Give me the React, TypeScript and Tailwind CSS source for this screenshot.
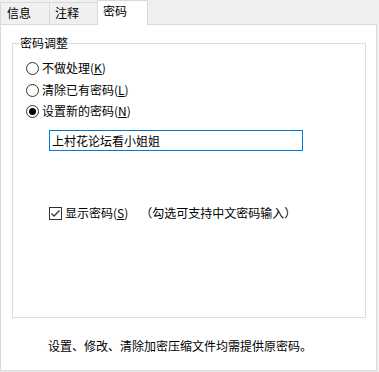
import React from "react";

function Radio({ checked }: { checked?: boolean }) {
  return (
    <svg width="13" height="13" viewBox="0 0 13 13" className="shrink-0">
      <circle cx="6.5" cy="6.5" r="6" fill="#fff" stroke="#333" strokeWidth="1" />
      {checked && <circle cx="6.5" cy="6.5" r="3.5" fill="#000" />}
    </svg>
  );
}

function Check() {
  return (
    <svg width="13" height="13" viewBox="0 0 13 13" className="shrink-0">
      <rect x="0.5" y="0.5" width="12" height="12" fill="#fff" stroke="#333" strokeWidth="1" />
      <polyline points="2.5,6.5 5,9 10.5,3.5" fill="none" stroke="#333" strokeWidth="1.3" />
    </svg>
  );
}

export default function App() {
  const font = { fontFamily: '"Noto Sans CJK SC", "Noto Sans", sans-serif' };
  return (
    <div
      className="w-[379px] h-[372px] bg-[#f0f0f0] text-[12px] text-black overflow-hidden"
      style={font}
    >
      {/* tabs */}
      <div className="flex items-end h-[24px]">
        <div className="w-[50px] h-[22px] border-l border-t border-r border-[#d9d9d9] pl-[6px] leading-[20px]">
          信息
        </div>
        <div className="w-[48px] h-[22px] border-t border-r border-[#d9d9d9] pl-[5px] leading-[20px]">
          注释
        </div>
        <div className="relative z-10 -ml-px -mb-px w-[51px] h-[25px] bg-white border-l border-t border-r border-[#d9d9d9] pl-[5px] leading-[20px]">
          密码
        </div>
      </div>
      {/* panel */}
      <div className="w-[377px] h-[347px] bg-white border border-[#d9d9d9] pl-[11px] pt-[18px]">
        <div className="relative w-[354px] h-[275px] border border-[#dcdcdc] pl-[13px] pt-[14px]">
          <span className="absolute left-[6px] top-[-9px] px-[1px] bg-white leading-[16px]">
            密码调整
          </span>
          <div className="flex items-center gap-[3px] h-[20px] leading-[20px]">
            <Radio />
            <span>
              不做处理(<span className="underline">K</span>)
            </span>
          </div>
          <div className="flex items-center gap-[3px] h-[20px] mt-[2px] leading-[20px]">
            <Radio />
            <span>
              清除已有密码(<span className="underline">L</span>)
            </span>
          </div>
          <div className="flex items-center gap-[3px] h-[20px] mt-[1px] leading-[20px]">
            <Radio checked />
            <span>
              设置新的密码(<span className="underline">N</span>)
            </span>
          </div>
          <div className="ml-[23px] mt-[9px] w-[254px] h-[21px] border border-[#0078d7] pl-[2px] text-[12px] leading-[19px]">
            上村花论坛看小姐姐
          </div>
          <div className="ml-[23px] mt-[52px] flex items-center gap-[3px] h-[20px] leading-[20px]">
            <Check />
            <span>
              显示密码(<span className="underline">S</span>)
            </span>
            <span className="ml-[9px]">（勾选可支持中文密码输入）</span>
          </div>
        </div>
        <div className="mt-[18px] ml-[36px] h-[20px] leading-[20px]">
          设置、修改、清除加密压缩文件均需提供原密码。
        </div>
      </div>
    </div>
  );
}
